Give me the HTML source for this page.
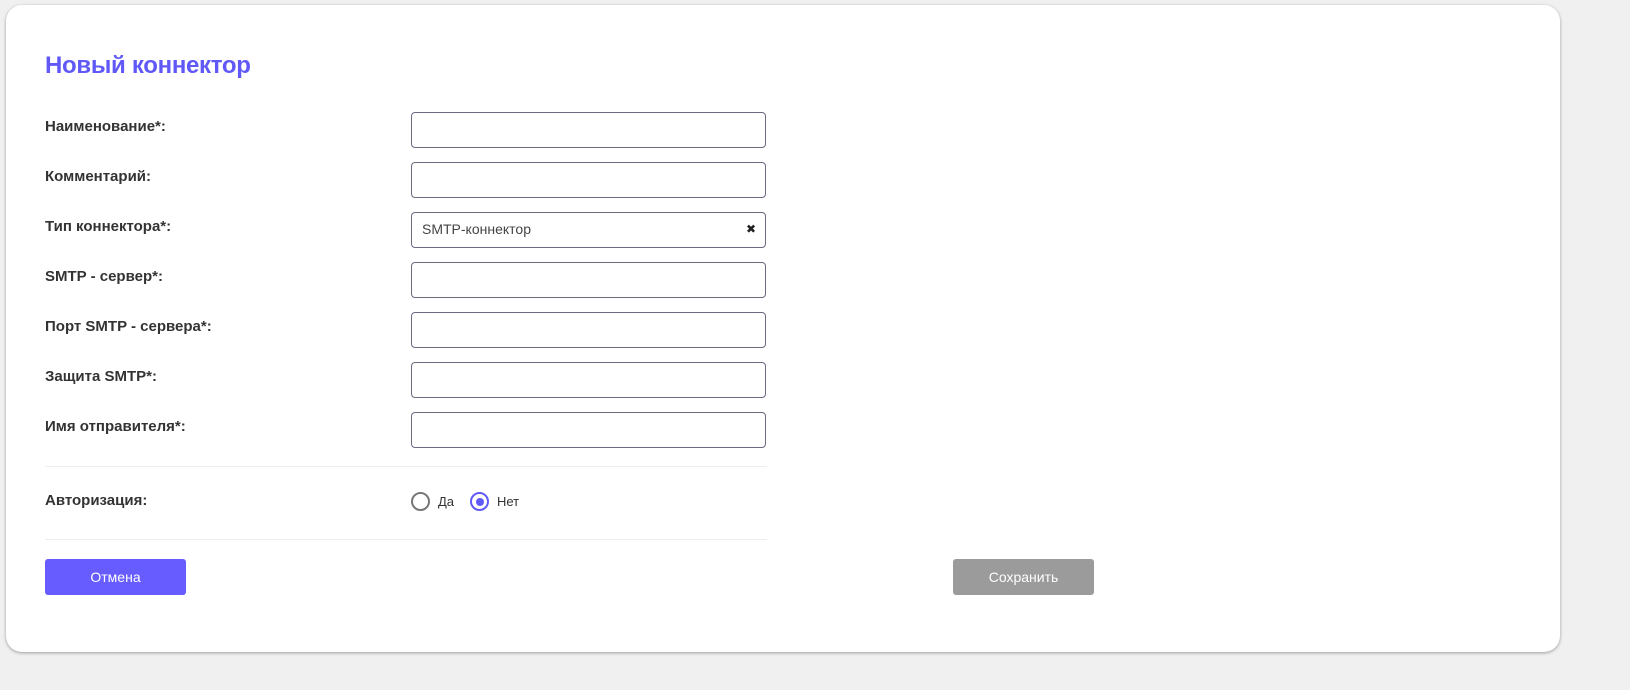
<!DOCTYPE html>
<html><head><meta charset="utf-8"><style>
body{margin:0;width:1630px;height:690px;background:#f0f0f0;font-family:"Liberation Sans",sans-serif;position:relative;overflow:hidden}
.card{position:absolute;left:6px;top:5px;width:1554px;height:647px;background:#fff;border-radius:16px;box-shadow:0 1px 3px rgba(0,0,0,.35)}
.t{position:absolute;left:45px;top:52px;font-size:24px;font-weight:bold;color:#6159f7;letter-spacing:-0.3px}
.l{position:absolute;left:45px;font-size:15px;font-weight:bold;color:#333}
.i{position:absolute;left:411px;width:353px;height:34px;border:1px solid #6b6b80;border-radius:4px;background:#fff}
.hr{position:absolute;left:45px;width:722px;height:1px;background:#eeeeee}
.b{position:absolute;top:559px;width:141px;height:36px;border-radius:3px;color:#fff;font-size:14px;text-align:center;line-height:36px}
.r{position:absolute;top:493px;width:15px;height:15px;border-radius:50%;box-sizing:border-box}
.rt{position:absolute;top:494px;font-size:13px;color:#333}
</style></head><body>
<div class="card"></div>
<div class="t">Новый коннектор</div>
<div class="l" style="top:118px">Наименование*:</div><div class="i" style="top:112px"></div>
<div class="l" style="top:168px">Комментарий:</div><div class="i" style="top:162px"></div>
<div class="l" style="top:218px">Тип коннектора*:</div><div class="i" style="top:212px"><span style="position:absolute;left:10px;top:8px;font-size:14px;color:#444">SMTP-коннектор</span><span style="position:absolute;right:9px;top:9px;font-size:12px;color:#222">✖</span></div>
<div class="l" style="top:268px">SMTP - сервер*:</div><div class="i" style="top:262px"></div>
<div class="l" style="top:318px">Порт SMTP - сервера*:</div><div class="i" style="top:312px"></div>
<div class="l" style="top:368px">Защита SMTP*:</div><div class="i" style="top:362px"></div>
<div class="l" style="top:418px">Имя отправителя*:</div><div class="i" style="top:412px"></div>
<div class="hr" style="top:466px"></div>
<div class="l" style="top:492px">Авторизация:</div>
<div class="r" style="left:411px;border:2px solid #777;width:19px;height:19px;top:492px"></div>
<div class="rt" style="left:438px">Да</div>
<div class="r" style="left:470px;border:2px solid #6159f7;width:19px;height:19px;top:492px"><div style="position:absolute;left:3.5px;top:3.5px;width:8px;height:8px;border-radius:50%;background:#6159f7"></div></div>
<div class="rt" style="left:497px">Нет</div>
<div class="hr" style="top:539px"></div>
<div class="b" style="left:45px;background:#665cff">Отмена</div>
<div class="b" style="left:953px;background:#9b9b9b">Сохранить</div>
</body></html>
